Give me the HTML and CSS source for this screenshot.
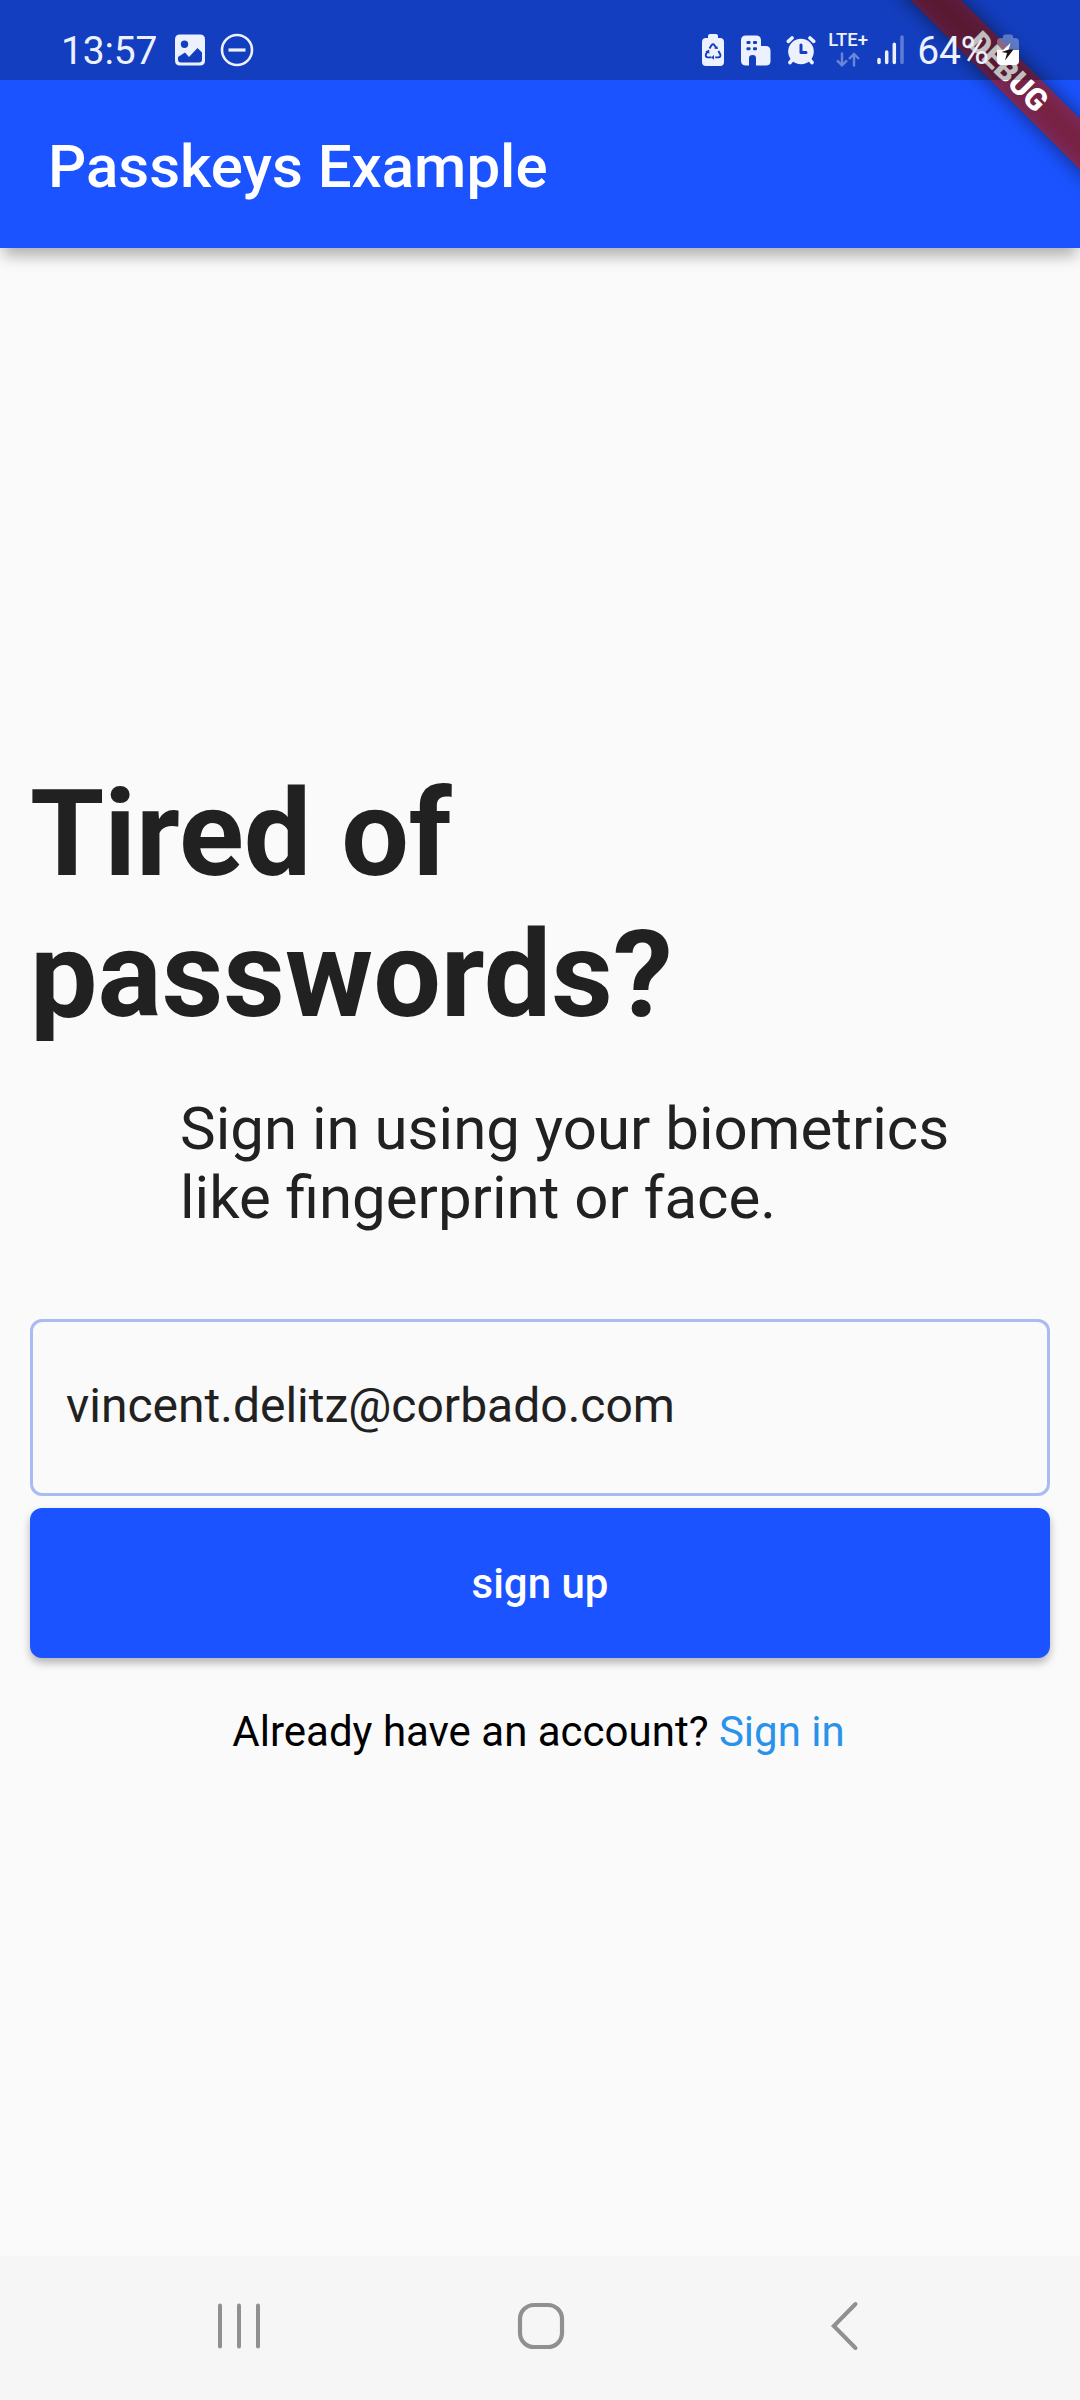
FILE: index.html
```html
<!DOCTYPE html>
<html lang="en">
<head>
<meta charset="utf-8">
<title>Passkeys Example</title>
<link rel="stylesheet" href="styles.css">
</head>
<body>
<div class="screen">
  <header class="top">
    <div class="statusbar">
      <div class="status-group">
        <span class="status-text">13:57</span>
        <svg class="icon-image" width="32" height="32" viewBox="0 0 32 32">
          <path fill="currentColor" fill-rule="evenodd" d="M6 .5h20q5 0 5 5v21q0 5-5 5H6q-5 0-5-5v-21q0-5 5-5ZM4 23v2.500q0 3 3 3h18q3 0 3-3V18.500L23.500 14l-8.500 9-4-4.500ZM10.500 6.500a3.700 3.700 0 1 0 0 7.400 3.700 3.700 0 0 0 0-7.400Z"/>
        </svg>
        <svg class="icon-dnd" width="34" height="34" viewBox="0 0 34 34" fill="none" stroke="currentColor">
          <circle cx="17" cy="17" r="15" stroke-width="2.600"/>
          <path d="M8.500 17h17" stroke-width="3.200"/>
        </svg>
      </div>
      <div class="status-group">
        <svg width="22" height="32" viewBox="0 0 22 32">
          <path fill="currentColor" d="M6 4V2q0-2 2-2h6q2 0 2 2v2h2q4 0 4 4v20q0 4-4 4H4q-4 0-4-4V8q0-4 4-4Z"/>
          <g fill="none" stroke="#143ec0" stroke-width="1.900">
            <path d="m7.500 14.500 2-3.300q1.500-2 3 0l2 3.300M16.400 17l1.800 3.200q1 3-2 3.200h-3M9.500 23.400H6q-3-.2-2-3.200L5.700 17"/>
          </g>
          <path fill="#143ec0" d="m16 15-4-.8 3.300-2ZM12 21v4.800l-2.700-2.400ZM3.500 17.500l3.600-1.800.4 4Z"/>
        </svg>
        <svg class="icon-building" width="30" height="31" viewBox="0 0 30 31">
          <path fill="currentColor" fill-rule="evenodd" d="M5 .5h10q5 0 5 5V11h4.500q5 0 5 5v10q0 4.500-4.500 4.500H15V23q0-3-3.500-3T8 23v7.500H5q-5 0-5-5v-20q0-5 5-5Z"/>
          <g fill="#143ec0"><rect x="5.500" y="6" width="4" height="3" rx="1"/><rect x="12" y="6" width="4" height="3" rx="1"/><rect x="5.500" y="12.300" width="4" height="3" rx="1"/><rect x="12" y="12.300" width="4" height="3" rx="1"/></g>
        </svg>
        <svg class="icon-alarm" width="30" height="29" viewBox="0 0 30 29">
          <circle cx="15" cy="15.500" r="12.800" fill="currentColor"/>
          <path fill="none" stroke="currentColor" stroke-width="3.600" stroke-linecap="round" d="m2.300 5.300 3.700-3.300M27.700 5.300l-3.700-3.300M6.500 23.500l-2.500 3M23.500 23.500l2.500 3"/>
          <path fill="none" stroke="#143ec0" stroke-width="3" stroke-linecap="round" stroke-linejoin="round" d="M15 9v7.500h5"/>
        </svg>
        <div class="network">
          <span class="network-label">LTE+</span>
          <svg width="24" height="15" viewBox="0 0 24 15" fill="none" stroke="currentColor" stroke-width="2.400">
            <path d="M6 .5v12.500M1 8.300l5 5 5-5M18 14.500V2M13 7l5-5 5 5"/>
          </svg>
        </div>
        <svg class="icon-signal" width="27" height="30" viewBox="0 0 27 30" stroke="currentColor" stroke-width="3.500" stroke-linecap="round">
          <path d="M2 24.500v3M9.700 17v10.500M17.300 9.200V27.500"/><path opacity=".35" d="M25 2v25.500"/>
        </svg>
        <span class="status-text percent">64%</span>
        <svg class="icon-battery" width="22" height="32" viewBox="0 0 22 32">
          <path fill="currentColor" opacity=".35" d="M6 4V2.500Q6 .5 8 .5h6q2 0 2 2V4h2q4 0 4 4v8H0V8q0-4 4-4Z"/>
          <path fill="#fff" d="M0 16h6l7.500-7-2 7H22v11q0 4-4 4H4q-4 0-4-4Z"/>
          <path fill="#151515" d="M4.500 18 12 15.500h4.500L8 26.500l2-7.500Z"/>
        </svg>
      </div>
    </div>
    <div class="debug-banner">DEBUG</div>
    <div class="appbar"><h1 class="appbar-title">Passkeys Example</h1></div>
  </header>

  <main class="content">
    <h2 class="headline">Tired of<br>passwords?</h2>
    <p class="subtitle">Sign in using your biometrics<br>like fingerprint or face.</p>
    <div class="field">vincent.delitz@corbado.com</div>
    <button class="signup">sign up</button>
    <p class="account">Already have an account? <a class="link">Sign in</a></p>
  </main>

  <nav class="navbar">
    <svg width="44" height="48" viewBox="0 0 44 48" stroke="currentColor" stroke-width="4" stroke-linecap="round">
      <path d="M3 3.500v41M22 3.500v41M41 3.500v41"/>
    </svg>
    <svg class="nav-home" width="48" height="48" viewBox="0 0 48 48" fill="none" stroke="currentColor" stroke-width="4.200">
      <rect x="3" y="3" width="42" height="42" rx="14"/>
    </svg>
    <svg class="nav-back" width="30" height="50" viewBox="0 0 30 50" fill="none" stroke="currentColor" stroke-width="4" stroke-linecap="round">
      <path d="M26.500 3 4.800 25 26.500 47"/>
    </svg>
  </nav>
</div>
</body>
</html>
```
FILE: styles.css
```css
* { box-sizing: border-box; }

body {
  margin: 0;
  font-family: Roboto, sans-serif;
  background: #fafafa;
}

h1, h2, p { margin: 0; }
svg { display: block; flex: none; }

.screen {
  width: 1080px;
  height: 2400px;
  display: flex;
  flex-direction: column;
  overflow: hidden;
}

/* App bar and the system status bar that lies over it */
.top {
  position: relative;
  flex: none;
  height: 248px;
  background: #1a53ff;
  box-shadow: 0 12px 14px -4px rgba(0, 0, 0, .26), 0 2px 20px rgba(0, 0, 0, .08);
}

.statusbar {
  position: relative;
  z-index: 2;
  height: 80px;
  padding: 0 61px 0 61px;
  display: flex;
  justify-content: space-between;
  background: rgba(0, 0, 0, .25);
  color: #edf1fd;
}

.status-group {
  display: flex;
  align-items: center;
  padding-top: 20px;
}

.status-text {
  padding-top: 1px;
  font-size: 39px;
  line-height: 48px;
  letter-spacing: -.2px;
}

.percent { margin-left: 13px; }
.icon-image { margin-left: 17px; }
.icon-dnd { margin-left: 14px; }
.icon-building { margin-left: 17px; }
.icon-alarm { margin-left: 15px; }
.icon-signal { margin-left: 9px; }
.icon-battery { margin-left: 8px; }

.network {
  margin: 0 0 2px 12px;
  width: 40px;
  display: flex;
  flex-direction: column;
  align-items: center;
  gap: 3px;
}

.network-label {
  font-size: 18.5px;
  font-weight: 500;
  line-height: 18px;
}

.network svg { opacity: .4; }

.debug-banner {
  position: absolute;
  z-index: 1;
  top: 0;
  right: -120px;
  width: 240px;
  height: 36px;
  transform-origin: 50% 0;
  transform: rotate(45deg) translateY(84px);
  color: #fff;
  font-size: 30.6px;
  font-weight: 900;
  line-height: 36px;
  text-align: center;
}

/* The ribbon is translucent, so its shadow also shows through it */
.debug-banner::before,
.debug-banner::after {
  content: "";
  position: absolute;
  z-index: -1;
  inset: 0 -20px;
}

.debug-banner::before {
  background: rgba(0, 0, 0, .5);
  filter: blur(10px);
}

.debug-banner::after { background: rgba(183, 28, 28, .627); }

.appbar {
  height: 168px;
  padding: 4px 0 0 48px;
  display: flex;
  align-items: center;
}

.appbar-title {
  color: #fff;
  font-size: 60px;
  font-weight: 500;
}

.content {
  flex: 1;
  display: flex;
  flex-direction: column;
  padding: 516px 30px 0;
  color: #212121;
}

.headline {
  font-size: 120px;
  font-weight: 700;
  line-height: 141px;
}

.subtitle {
  margin: 48px 0 0 150px;
  font-size: 60px;
  line-height: 69px;
}

.field {
  height: 177px;
  margin-top: 87px;
  padding: 0 33px 4px;
  display: flex;
  align-items: center;
  border: 3px solid #a8bbf3;
  border-radius: 12px;
  font-size: 48px;
}

.signup {
  height: 150px;
  margin-top: 12px;
  padding: 1px 0 0;
  border: 0;
  border-radius: 12px;
  background: #1a53ff;
  box-shadow: 0 5px 8px rgba(0, 0, 0, .28);
  color: #fff;
  font: 500 42px Roboto, sans-serif;
}

.account {
  margin-top: 49px;
  padding-right: 3px;
  color: #000;
  font-size: 42px;
  line-height: 49px;
  text-align: center;
}

.link { color: #2993ea; }

/* System navigation */
.navbar {
  flex: none;
  height: 144px;
  display: flex;
  align-items: center;
  background: #f6f6f6;
  color: #909090;
  padding: 0 0 4px 217px;
}

.nav-home { margin-left: 256px; }
.nav-back { margin-left: 264px; }
```
